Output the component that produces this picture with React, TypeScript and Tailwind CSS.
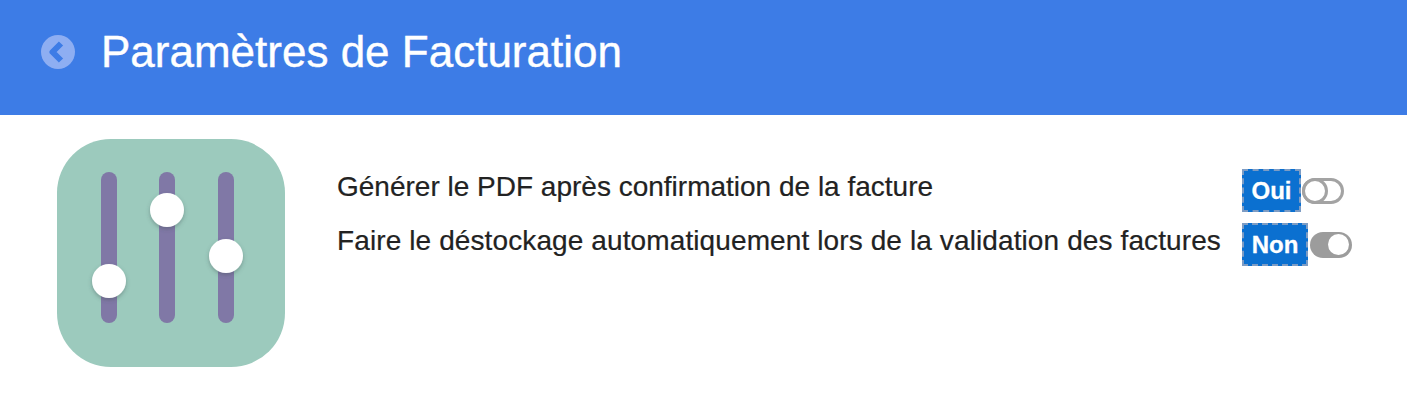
const SlidersIcon = () => {
  const sliders = [
    { x: 52, knob: 142 },
    { x: 110, knob: 71 },
    { x: 169, knob: 117 },
  ]

  return (
    <svg width="228" height="228" viewBox="0 0 228 228" className="shrink-0">
      <defs>
        <filter id="knob-shadow" x="-30%" y="-30%" width="160%" height="170%">
          <feDropShadow dx="0" dy="2" stdDeviation="2" floodColor="#3c4f55" floodOpacity="0.4" />
        </filter>
      </defs>
      <rect width="228" height="228" rx="54" fill="#9ccabd" />
      {sliders.map((s) => (
        <g key={s.x}>
          <rect x={s.x - 8} y="33" width="16" height="151" rx="8" fill="#8078a6" />
          <circle cx={s.x} cy={s.knob} r="17" fill="#ffffff" filter="url(#knob-shadow)" />
        </g>
      ))}
    </svg>
  )
}

const BackIcon = () => (
  <svg width="34" height="34" viewBox="0 0 34 34" className="shrink-0">
    <circle cx="17" cy="17" r="17" fill="#8eaef2" />
    <path d="M20 8.5 L11.5 17 L20 25.5" fill="none" stroke="#3d7ce6" strokeWidth="6" strokeLinejoin="round" />
  </svg>
)

const Badge = ({ label, width }: { label: string; width: string }) => (
  <div
    className={`flex h-[43px] items-center justify-center border-2 border-dashed border-[#7d9cc4] bg-[#0b70d0] text-[24px] font-bold text-white [-webkit-text-stroke:0.3px_white] ${width}`}
  >
    {label}
  </div>
)

const Toggle = ({ on }: { on: boolean }) => {
  return on ? (
    <div className="flex h-[26px] w-[42px] items-center justify-end rounded-full bg-[#9c9c9c] pr-[3px]">
      <div className="size-[21px] rounded-full bg-white" />
    </div>
  ) : (
    <div className="flex h-[26px] w-[42px] items-center rounded-full border-[3px] border-[#a3a3a3] bg-white">
      <div className="-ml-[3px] size-[26px] rounded-full border-[3px] border-[#a3a3a3] bg-white" />
    </div>
  )
}

export default function App() {
  return (
    <div className="h-[404px] w-[1407px] bg-white font-['Liberation_Sans',Arial,sans-serif] text-[#222222]">
      <div className="flex h-[115px] items-center bg-[#3d7ce6] pb-[12px] pl-[41px]">
        <BackIcon />
        <h1 className="ml-[26px] text-[44px] leading-none font-normal text-white [-webkit-text-stroke:0.4px_white]">
          Paramètres de Facturation
        </h1>
      </div>
      <div className="flex pt-[24px] pl-[57px]">
        <SlidersIcon />
        <div className="mt-[30px] ml-[52px] flex flex-col gap-[11px]">
          <div className="flex h-[43px] items-center">
            <span className="w-[905px] pb-[7px] text-[28px] leading-none [-webkit-text-stroke:0.2px_#222222]">
              Générer le PDF après confirmation de la facture
            </span>
            <Badge label="Oui" width="w-[59px]" />
            <div className="ml-[1px]">
              <Toggle on={false} />
            </div>
          </div>
          <div className="flex h-[43px] items-center">
            <span className="w-[905px] pb-[7px] text-[28px] leading-none tracking-[0.11px] [-webkit-text-stroke:0.2px_#222222]">
              Faire le déstockage automatiquement lors de la validation des factures
            </span>
            <Badge label="Non" width="w-[66px]" />
            <div className="ml-[2px]">
              <Toggle on={true} />
            </div>
          </div>
        </div>
      </div>
    </div>
  )
}
